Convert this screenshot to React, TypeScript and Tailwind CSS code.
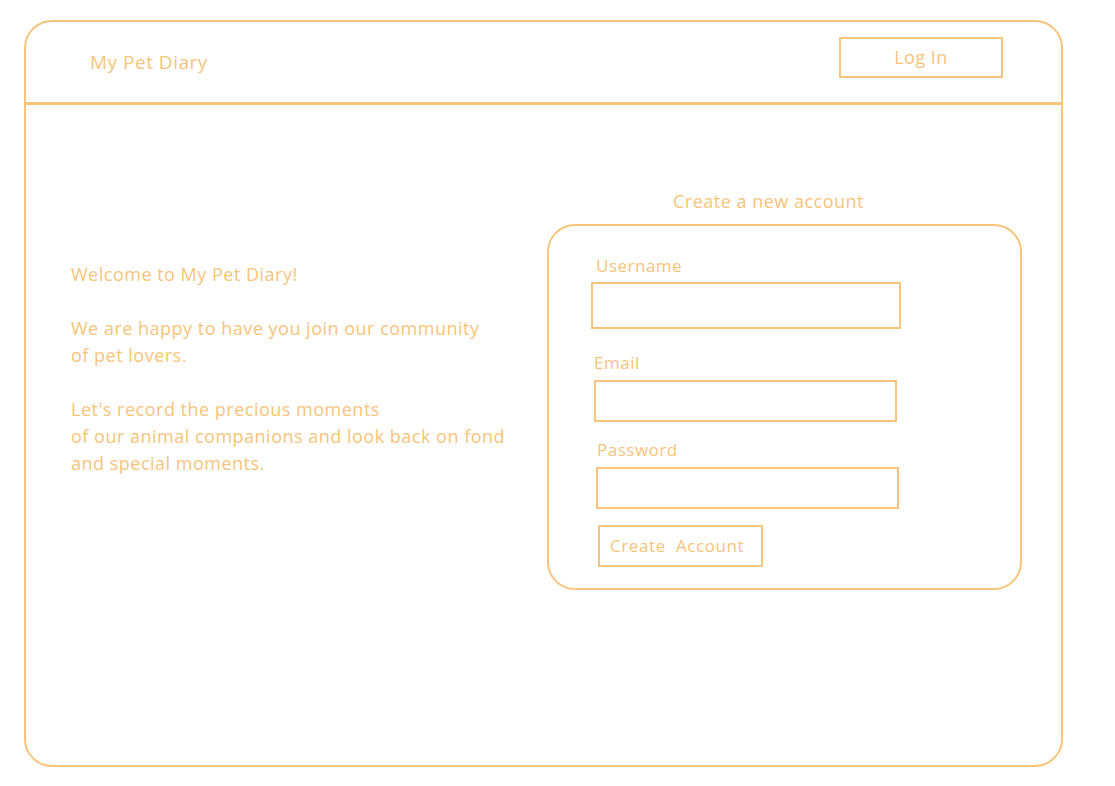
import React from "react";

export default function App() {
  const c = "text-[#f7c47b]";
  return (
    <div className="relative w-[1115px] h-[786px] bg-white overflow-hidden" style={{ fontFamily: "'Open Sans', 'Noto Sans', sans-serif" }}>
      <div className="pt-[20px] pl-[24px]">
        <div className="w-[1039px] h-[747px] border-2 border-[#f7c47b] rounded-[28px] flex flex-col">
          <div className="h-[83px] border-b-[3px] border-[#f7c47b] flex items-center justify-between pl-[66px] pr-[60px] -mx-[2px]">
            <span className={`${c} text-[19px] tracking-[0.5px] mt-[1px]`}>My Pet Diary</span>
            <div className={`w-[164px] h-[41px] border-2 border-[#f7c47b] flex items-center justify-center ${c} text-[18px] tracking-[0.5px] -mt-[10px]`}>Log In</div>
          </div>
          <div className="flex flex-1">
            <div className={`w-[521px] pl-[45px] pt-[156px] ${c} text-[18px] tracking-[0.5px] leading-[27px]`}>
              <p>Welcome to My Pet Diary!</p>
              <p className="mt-[27px]">We are happy to have you join our community<br />of pet lovers.</p>
              <p className="mt-[27px]">Let's record the precious moments<br />of our animal companions and look back on fond<br />and special moments.</p>
            </div>
            <div className="pt-[84px]">
              <div className={`w-[475px] text-center ${c} text-[18px] tracking-[0.5px] leading-[24px] pr-[32px]`}>Create a new account</div>
              <div className="mt-[11px] w-[475px] h-[366px] border-2 border-[#f7c47b] rounded-[28px] pl-[42px] pt-[29px] flex flex-col">
                <label className={`${c} text-[17px] tracking-[0.5px] leading-[22px] ml-[5px]`}>Username</label>
                <div className="mt-[5px] w-[310px] h-[47px] border-2 border-[#f7c47b]" />
                <label className={`${c} text-[17px] tracking-[0.5px] leading-[22px] ml-[3px] mt-[23px]`}>Email</label>
                <div className="mt-[6px] ml-[3px] w-[303px] h-[42px] border-2 border-[#f7c47b]" />
                <label className={`${c} text-[17px] tracking-[0.5px] leading-[22px] ml-[6px] mt-[17px]`}>Password</label>
                <div className="mt-[6px] ml-[5px] w-[303px] h-[42px] border-2 border-[#f7c47b]" />
                <div className={`mt-[16px] ml-[7px] w-[165px] h-[42px] border-2 border-[#f7c47b] flex items-center pl-[10px] ${c} text-[17px] tracking-[0.6px] whitespace-pre`}>Create  Account</div>
              </div>
            </div>
          </div>
        </div>
      </div>
    </div>
  );
}
